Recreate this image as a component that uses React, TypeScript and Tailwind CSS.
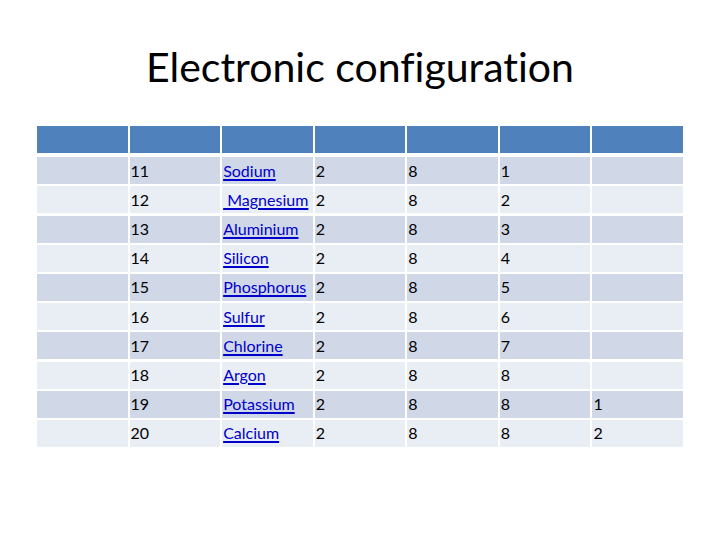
const rows = [
  { z: '11', name: 'Sodium', shells: ['2', '8', '1', ''] },
  { z: '12', name: '\u00a0Magnesium', shells: ['2', '8', '2', ''] },
  { z: '13', name: 'Aluminium', shells: ['2', '8', '3', ''] },
  { z: '14', name: 'Silicon', shells: ['2', '8', '4', ''] },
  { z: '15', name: 'Phosphorus', shells: ['2', '8', '5', ''] },
  { z: '16', name: 'Sulfur', shells: ['2', '8', '6', ''] },
  { z: '17', name: 'Chlorine', shells: ['2', '8', '7', ''] },
  { z: '18', name: 'Argon', shells: ['2', '8', '8', ''] },
  { z: '19', name: 'Potassium', shells: ['2', '8', '8', '1'] },
  { z: '20', name: 'Calcium', shells: ['2', '8', '8', '2'] },
]

export default function App() {
  return (
    <div
      className="w-[720px] h-[540px] bg-white [font-variant-ligatures:none]"
      style={{ fontFamily: 'Lato, "Open Sans", sans-serif' }}
    >
      {/* Title */}
      <div className="pt-[41px] h-[126px] text-center">
        <h1 className="text-[41px] leading-[52px] text-black">Electronic configuration</h1>
      </div>

      {/* Table */}
      <div className="ml-[37px] w-[646px] flex flex-col gap-[2.2px]">
        <div className="grid grid-cols-7 gap-x-[2px] h-[27px] mb-[2px]">
          {Array.from({ length: 7 }).map((_, i) => (
            <div key={i} className="bg-[#4f81bd]" />
          ))}
        </div>
        {rows.map((r, idx) => {
          const bg = idx % 2 === 0 ? 'bg-[#d0d8e8]' : 'bg-[#e9edf4]'
          return (
            <div key={r.z} className="grid grid-cols-7 gap-x-[2px] h-[27px] text-[16px] text-black">
              <div className={bg} />
              <div className={`${bg} flex items-center pl-[1px]`}>{r.z}</div>
              <div className={`${bg} flex items-center pl-[1px] whitespace-nowrap`}>
                <span className="text-[#0000cc] underline underline-offset-[2px] decoration-[1.5px]">{r.name}</span>
              </div>
              {r.shells.map((s, i) => (
                <div key={i} className={`${bg} flex items-center pl-[1px]`}>{s}</div>
              ))}
            </div>
          )
        })}
      </div>
    </div>
  )
}
